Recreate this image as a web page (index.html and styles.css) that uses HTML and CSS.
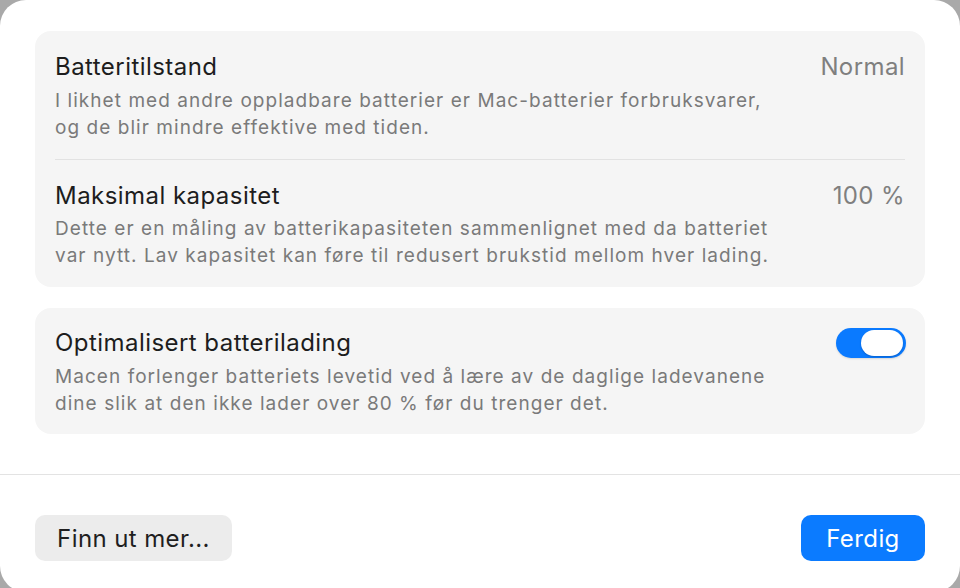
FILE: index.html
```html
<!DOCTYPE html>
<html lang="no">
<head>
<meta charset="utf-8">
<title>Batteri</title>
<link rel="stylesheet" href="styles.css">
</head>
<body>
<div class="window">
  <div class="content">
    <section class="card">
      <div class="row">
        <div class="text">
          <div class="title">Batteritilstand</div>
          <div class="desc">I likhet med andre oppladbare batterier er Mac-batterier forbruksvarer,<br>og de blir mindre effektive med tiden.</div>
        </div>
        <div class="value">Normal</div>
      </div>
      <div class="divider"></div>
      <div class="row">
        <div class="text">
          <div class="title">Maksimal kapasitet</div>
          <div class="desc">Dette er en måling av batterikapasiteten sammenlignet med da batteriet<br>var nytt. Lav kapasitet kan føre til redusert brukstid mellom hver lading.</div>
        </div>
        <div class="value">100 %</div>
      </div>
    </section>
    <section class="card">
      <div class="row row-last">
        <div class="text">
          <div class="title">Optimalisert batterilading</div>
          <div class="desc">Macen forlenger batteriets levetid ved å lære av de daglige ladevanene<br>dine slik at den ikke lader over 80 % før du trenger det.</div>
        </div>
        <div class="toggle"><div class="knob"></div></div>
      </div>
    </section>
  </div>
  <div class="footer">
    <button class="btn btn-secondary">Finn ut mer...</button>
    <button class="btn btn-primary">Ferdig</button>
  </div>
</div>
</body>
</html>
```

FILE: styles.css
```css
html, body {
  margin: 0;
  padding: 0;
}
body {
  width: 960px;
  height: 588px;
  overflow: hidden;
  background: #a9a9a9;
  font-family: "Inter", "Noto Sans", "Liberation Sans", sans-serif;
}
.window {
  width: 960px;
  height: 592px;
  background: #ffffff;
  border-radius: 26px;
  box-sizing: border-box;
  display: flex;
  flex-direction: column;
}
.content {
  padding: 31px 35px 0 35px;
  display: flex;
  flex-direction: column;
  gap: 21px;
  border-bottom: 1.5px solid #e3e3e3;
  padding-bottom: 40px;
}
.card {
  background: #f5f5f5;
  border-radius: 16px;
  display: flex;
  flex-direction: column;
}
.row {
  display: flex;
  justify-content: space-between;
  align-items: flex-start;
  padding: 21px 20px 18px 20px;
}
.row-last {
  padding-top: 20px;
  padding-bottom: 17.5px;
}
.text {
  display: flex;
  flex-direction: column;
  gap: 4.5px;
}
.title {
  font-size: 24px;
  line-height: 30px;
  color: #1d1d1d;
  letter-spacing: 0.45px;
}
.desc {
  font-size: 19px;
  line-height: 27px;
  color: #7a7a7a;
  letter-spacing: 1.05px;
  white-space: nowrap;
}
.value {
  font-size: 24px;
  line-height: 30px;
  color: #7f7f7f;
  letter-spacing: 0.4px;
}
.divider {
  height: 1px;
  background: #e2e2e2;
  margin: 0 20px;
}
.toggle {
  width: 70px;
  height: 30px;
  border-radius: 15px;
  background: #0a7aff;
  box-sizing: border-box;
  padding: 2px 3px 2px 2px;
  display: flex;
  justify-content: flex-end;
  box-shadow: 0 1px 2px rgba(0,0,0,0.12);
  flex-shrink: 0;
  margin-right: -1px;
}
.knob {
  width: 42px;
  height: 26px;
  border-radius: 13px;
  background: #ffffff;
  box-shadow: 0 1px 2px rgba(0,0,0,0.2);
}
.footer {
  display: flex;
  justify-content: space-between;
  padding: 40px 35px 0 35px;
}
.btn {
  font-family: inherit;
  font-size: 24px;
  letter-spacing: 0.4px;
  border: none;
  border-radius: 10px;
  height: 46px;
  padding: 0;
  cursor: default;
}
.btn-secondary {
  width: 197px;
  background: #ececec;
  color: #1f1f1f;
}
.btn-primary {
  width: 124px;
  background: #0b7bff;
  color: #ffffff;
}
```
